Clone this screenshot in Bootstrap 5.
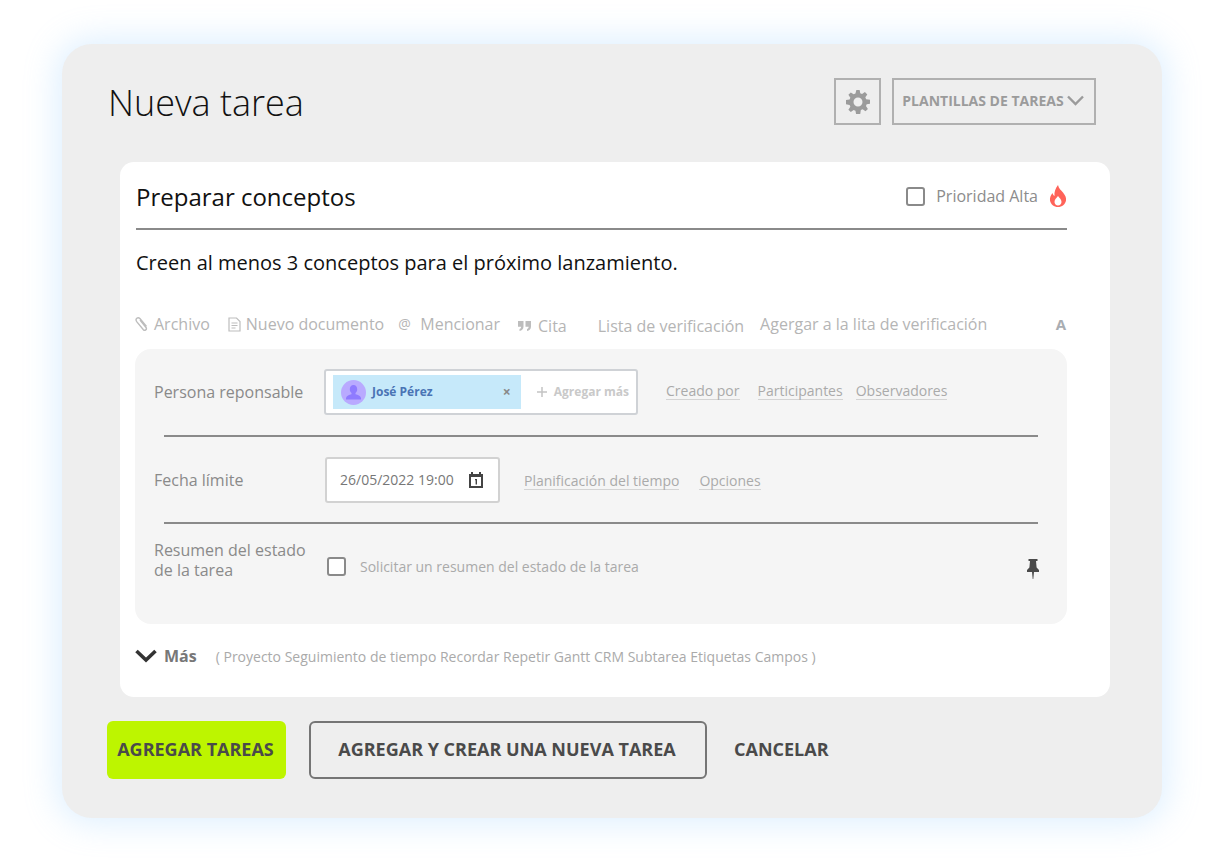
<!DOCTYPE html>
<html lang="es">
<head>
<meta charset="utf-8">
<title>Nueva tarea</title>
<link href="https://cdn.jsdelivr.net/npm/bootstrap@5.3.0/dist/css/bootstrap.min.css" rel="stylesheet">
<style>
html,body{height:860px;overflow:hidden;background:#fff;}
body{font-family:"Open Sans",sans-serif;padding:44px 62px 0;}
.panel-main{width:1100px;height:774px;background:#eee;border-radius:30px;box-shadow:0 0 32px 6px rgba(150,205,255,.3);padding:34px 52px 0 46px;}
.head-row{height:47px;margin-right:14px;}
.page-title{font-size:36px;font-weight:300;color:#111;margin:3px 0 0;line-height:50px;}
.tool-btn{height:47px;border:2px solid #b0b0b0;border-radius:0;background:transparent;color:#9b9b9b;font-weight:700;font-size:14px;padding:0;}
.tool-gear{width:47px;}
.tool-tpl{width:204px;margin-left:11px;gap:3px;white-space:nowrap;padding:0 2px 2px 0;}
.task-card{margin:37px 0 0 12px;width:990px;height:535px;background:#fff;border-radius:14px;padding:0 43px 0 16px;}
.title-row{height:68px;border-bottom:2px solid #8a8a8a;padding-top:2px;}
.task-name{font-size:24px;color:#111;margin-top:2px;}
.prio{font-size:16px;color:#8c8c8c;margin-right:-1px;}
.box{width:19px;height:19px;border:2px solid #8a8a8a;border-radius:3px;background:#fff;flex:none;}
.desc{font-size:20px;color:#111;margin-top:19px;line-height:28px;height:28px;}
.tool-row{margin-top:35px;height:26px;font-size:16px;color:#b5b5b5;position:relative;top:-1px;}
.tool-item{display:flex;align-items:center;gap:4px;line-height:22px;white-space:nowrap;}
.gray-box{margin-top:11px;height:275px;background:#f5f5f5;border-radius:16px;padding:0 29px 0 19px;margin-left:-1px;}
.line-row{height:87px;border-bottom:2px solid #8a8a8a;margin-left:10px;}
.line-first{height:88px;}
.line-last{height:85px;border:0;}
.row-label{width:170px;margin-left:-10px;font-size:16px;color:#8a8a8a;line-height:20px;flex:none;}
.label-high{margin-top:-14px;}
.people{width:314px;height:46px;background:#fff;border:2px solid #cfd2d6;border-radius:3px;padding:3px 7px;flex:none;}
.chip{width:188px;height:34px;background:#c6e9fa;padding:0 10px 0 8px;font-size:12px;font-weight:700;color:#4a74b5;gap:6px;}
.avatar{width:25px;height:25px;flex:none;}
.chip-x{margin-left:auto;color:#888;font-size:14px;line-height:1;}
.more-add{font-size:12px;font-weight:700;color:#c9c9c9;margin-left:16px;white-space:nowrap;gap:7px;}
.ulink{font-size:14px;color:#aaa;text-decoration:none;border-bottom:1px solid #d4d4d4;line-height:17px;white-space:nowrap;}
.link-up{margin-top:-2px;}
.link-down{margin-top:2px;}
.date-field{width:175px;height:46px;background:#fff;border:2px solid #d2d2d2;border-radius:3px;font-size:14px;color:#777;padding:0 14px 0 13px;flex:none;margin-left:1px;}
.req-text{font-size:14px;color:#aaa;}
.more-row{height:24px;margin-top:20px;}
.more-lbl{font-size:16px;font-weight:700;color:#777;}
.more-list{font-size:14px;color:#aaa;margin-left:19px;white-space:nowrap;}
.foot-row{margin:24px 0 0 -1px;height:58px;}
.act{height:58px;border-radius:6px;font-size:18px;font-weight:700;color:#4a4a4a;padding:0 2px 2px 0;}
.act-main{width:179px;background:#bdf500;border:0;}
.act-main:hover{background:#bdf500;color:#4a4a4a;}
.act-sec{width:398px;background:transparent;border:2px solid #757575;margin-left:23px;}
.act-txt{background:transparent;border:0;margin-left:27px;}
</style>
</head>
<body>
<div class="panel-main">
  <div class="head-row d-flex align-items-center justify-content-between">
    <h1 class="page-title">Nueva tarea</h1>
    <div class="d-flex">
      <button class="btn tool-btn tool-gear d-flex align-items-center justify-content-center" aria-label="Ajustes">
        <svg width="24" height="24" viewBox="0 0 16 16" fill="#9b9b9b"><path fill-rule="evenodd" d="M6.9 0h2.2l.4 2.2 1.2.5 1.900-1.300 1.600 1.600-1.300 1.900.5 1.200L16 6.500v2.600l-2.200.4-.5 1.200 1.300 1.900-1.600 1.600-1.900-1.300-1.200.5L9.500 16H6.700l-.4-2.100-1.200-.5-1.900 1.300-1.600-1.600 1.300-1.900-.5-1.200L0 9.500V6.700l2.400-.4.5-1.200-1.300-1.900 1.600-1.600 1.900 1.300 1.200-.5zM8 5a3 3 0 1 0 0 6 3 3 0 0 0 0-6z"/></svg>
      </button>
      <button class="btn tool-btn tool-tpl d-flex align-items-center justify-content-center">PLANTILLAS DE TAREAS
        <svg width="17" height="11" viewBox="0 0 17 11" fill="none" stroke="#9b9b9b" stroke-width="2.400"><path d="M1 1.500l7.500 7.500L16 1.500"/></svg>
      </button>
    </div>
  </div>

  <div class="task-card">
    <div class="title-row d-flex align-items-center justify-content-between">
      <span class="task-name">Preparar conceptos</span>
      <span class="prio d-flex align-items-center">
        <span class="box" style="margin-right:11px"></span>Prioridad Alta
        <svg style="margin-left:10px" width="20" height="24" viewBox="0 0 20 24"><path fill="#ff6359" fill-rule="evenodd" d="M10 1c.6 3.500 3 5 5 7.500 2 2.500 3.500 5 3 8-.6 3.800-4 6.500-8 6.500s-7.400-2.700-8-6.500c-.4-2.800.8-5.300 2.500-7.500.3 1.500 1 2.400 2 3C6 8 7.500 4 10 1zm0 11c-1.500 2-3.500 3.500-3.500 6 0 1.900 1.600 3.500 3.500 3.500s3.500-1.600 3.500-3.500c0-2.500-2-4-3.500-6z"/></svg>
      </span>
    </div>
    <div class="desc">Creen al menos 3 conceptos para el próximo lanzamiento.</div>

    <div class="tool-row d-flex align-items-center">
      <span class="tool-item" style="margin-left:-1px">
        <svg width="14" height="16" viewBox="0 0 14 16" fill="none" stroke="#bdbdbd" stroke-width="1.400"><path d="M5 4l6 7.500c1.300 1.800-1.200 3.800-2.600 2.200L1.700 5.600C-.2 3 2.800.4 4.900 2.500l6.600 8"/></svg><span style="margin-left:1px">Archivo</span>
      </span>
      <span class="tool-item" style="margin-left:18px">
        <svg width="13" height="15" viewBox="0 0 13 15" fill="none" stroke="#bdbdbd" stroke-width="1.200"><path d="M1 1h7.500L12 4.500V14H1zM3.500 6h6M3.500 8.500h6M3.500 11h4"/></svg><span style="margin-left:1px">Nuevo documento</span>
      </span>
      <span class="tool-item" style="margin-left:14px;gap:8px">
        <span style="font-size:14px;width:14px">@</span>Mencionar
      </span>
      <span class="tool-item" style="margin-left:18px;margin-top:3px;gap:7px">
        <svg width="13" height="10" viewBox="0 0 13 10" fill="#bdbdbd"><path d="M0 0h5.500v5.500C5.500 8 4 9.500 1.500 10V8c1-.3 1.600-1 1.700-2.200H0zM7.500 0H13v5.500C13 8 11.500 9.500 9 10V8c1-.3 1.600-1 1.700-2.200H7.500z"/></svg>Cita
      </span>
      <span class="tool-item" style="margin-left:31px;margin-top:3px">Lista de verificación</span>
      <span class="tool-item" style="margin-left:16px">Agergar a la lita de verificación</span>
      <span class="tool-item fw-bold ms-auto" style="color:#a9adb2;font-size:15px;margin-right:1px">A</span>
    </div>

    <div class="gray-box">
      <div class="line-row line-first d-flex align-items-center">
        <span class="row-label">Persona reponsable</span>
        <div class="people d-flex align-items-center">
          <div class="chip d-flex align-items-center">
            <svg class="avatar" viewBox="0 0 25 25"><circle cx="12.500" cy="12.500" r="12.500" fill="#b9aaff"/><path fill="#8f7bff" d="M12.500 5c2.300 0 3.700 1.800 3.700 4.200 0 1.600-.7 3-1.700 3.800v1.200c2.500.8 4.900 1.300 5.500 3.800v1.500H5v-1.500c.6-2.500 3-3 5.500-3.800V13c-1-.8-1.700-2.200-1.700-3.800C8.800 6.800 10.200 5 12.500 5z"/></svg>
            José Pérez
            <span class="chip-x">×</span>
          </div>
          <span class="more-add d-flex align-items-center">
            <svg width="10" height="10" viewBox="0 0 10 10" stroke="#c4c4c4" stroke-width="1.500"><path d="M5 0v10M0 5h10"/></svg>Agregar más</span>
        </div>
        <a class="ulink link-up" href="#" style="margin-left:28px">Creado por</a>
        <a class="ulink link-up" href="#" style="margin-left:18px">Participantes</a>
        <a class="ulink link-up" href="#" style="margin-left:13px">Observadores</a>
      </div>
      <div class="line-row d-flex align-items-center">
        <span class="row-label">Fecha límite</span>
        <div class="date-field d-flex align-items-center justify-content-between">
          26/05/2022 19:00
          <svg width="16" height="16" viewBox="0 0 16 16"><path fill="#444" fill-rule="evenodd" d="M1 2h2V0h2v2h6V0h2v2h2v14H1zM3 5v9h10V5z"/><path fill="#444" d="M7 7h2v5.500H7.600V8.300H7z"/></svg>
        </div>
        <a class="ulink link-down" href="#" style="margin-left:24px">Planificación del tiempo</a>
        <a class="ulink link-down" href="#" style="margin-left:20px">Opciones</a>
      </div>
      <div class="line-row line-last d-flex align-items-center">
        <span class="row-label label-high">Resumen del estado<br>de la tarea</span>
        <span class="box" style="margin-left:3px"></span>
        <span class="req-text" style="margin-left:14px">Solicitar un resumen del estado de la tarea</span>
        <svg class="ms-auto" style="margin:4px -1px 0 0" width="12" height="20" viewBox="0 0 12 20"><path fill="#4a4a4a" d="M1.500 0h9v2H9l.6 6.500L12 11v2H7l-.7 7h-.6L5 13H0v-2l2.400-2.500L3 2H1.500z"/></svg>
      </div>
    </div>

    <div class="more-row d-flex align-items-center">
      <svg style="margin-left:-1px" width="22" height="14" viewBox="0 0 22 14" fill="none" stroke="#333" stroke-width="3.600"><path d="M1.500 2L11 11l9.500-9"/></svg>
      <span class="more-lbl" style="margin-left:7px">Más</span>
      <span class="more-list">( Proyecto Seguimiento de tiempo Recordar Repetir Gantt CRM Subtarea Etiquetas Campos )</span>
    </div>
  </div>

  <div class="foot-row d-flex">
    <button class="btn act act-main">AGREGAR TAREAS</button>
    <button class="btn act act-sec">AGREGAR Y CREAR UNA NUEVA TAREA</button>
    <button class="btn act act-txt">CANCELAR</button>
  </div>
</div>
<script src="https://cdn.jsdelivr.net/npm/bootstrap@5.3.0/dist/js/bootstrap.bundle.min.js"></script>
</body>
</html>
